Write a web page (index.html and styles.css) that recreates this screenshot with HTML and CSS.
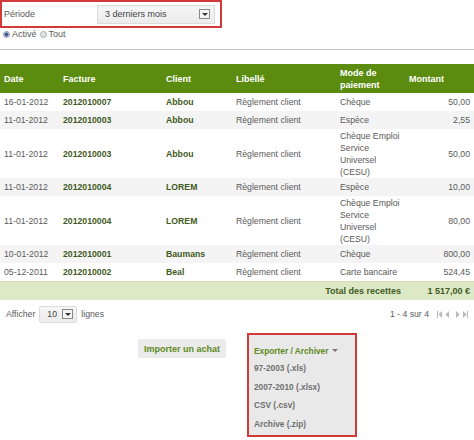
FILE: index.html
```html
<!DOCTYPE html>
<html lang="fr">
<head>
<meta charset="utf-8">
<link rel="stylesheet" href="styles.css">
</head>
<body>
<div class="page">
  <div class="filter">
    <span class="filter-label">Période</span>
    <div class="select select-period">
      <span>3 derniers mois</span>
      <span class="select-btn"><svg width="6" height="3" viewBox="0 0 6 3"><path d="M0 0h6L3 3z" fill="#333"/></svg></span>
    </div>
  </div>
  <div class="radios">
    <span class="radio checked"></span><span class="radio-label">Activé</span>
    <span class="radio"></span><span class="radio-label">Tout</span>
  </div>
  <div class="sep"></div>

  <table class="grid">
    <colgroup>
      <col class="c-date"><col class="c-fact"><col class="c-client"><col class="c-lib"><col class="c-mode"><col class="c-mont">
    </colgroup>
    <thead>
      <tr><th>Date</th><th>Facture</th><th>Client</th><th>Libellé</th><th>Mode de<br>paiement</th><th>Montant</th></tr>
    </thead>
    <tbody>
      <tr><td>16-01-2012</td><td class="b">2012010007</td><td class="b">Abbou</td><td>Règlement client</td><td>Chèque</td><td class="num">50,00</td></tr>
      <tr class="alt"><td>11-01-2012</td><td class="b">2012010003</td><td class="b">Abbou</td><td>Règlement client</td><td>Espèce</td><td class="num">2,55</td></tr>
      <tr class="tall"><td>11-01-2012</td><td class="b">2012010003</td><td class="b">Abbou</td><td>Règlement client</td><td class="wrap">Chèque Emploi Service Universel (CESU)</td><td class="num">50,00</td></tr>
      <tr class="alt"><td>11-01-2012</td><td class="b">2012010004</td><td class="b">LOREM</td><td>Règlement client</td><td>Espèce</td><td class="num">10,00</td></tr>
      <tr class="tall"><td>11-01-2012</td><td class="b">2012010004</td><td class="b">LOREM</td><td>Règlement client</td><td class="wrap">Chèque Emploi Service Universel (CESU)</td><td class="num">80,00</td></tr>
      <tr class="alt"><td>10-01-2012</td><td class="b">2012010001</td><td class="b">Baumans</td><td>Règlement client</td><td>Chèque</td><td class="num">800,00</td></tr>
      <tr><td>05-12-2011</td><td class="b">2012010002</td><td class="b">Beal</td><td>Règlement client</td><td>Carte bancaire</td><td class="num">524,45</td></tr>
    </tbody>
    <tfoot>
      <tr><td colspan="5" class="total-label">Total des recettes</td><td class="num total-val">1 517,00 €</td></tr>
    </tfoot>
  </table>

  <div class="pager">
    <div class="show">
      <span>Afficher</span>
      <div class="select select-len">
        <span>10</span>
        <span class="select-btn"><svg width="6" height="3" viewBox="0 0 6 3"><path d="M0 0h6L3 3z" fill="#333"/></svg></span>
      </div>
      <span>lignes</span>
    </div>
    <div class="pages">
      <span>1 - 4 sur 4</span>
      <span class="nav">
        <svg width="33" height="7" viewBox="0 0 33 7">
          <g fill="#b8b8b8">
            <rect x="0" y="0" width="1" height="7"/><path d="M5 0v7L1.5 3.5z"/>
            <path d="M12 0v7L8.5 3.5z"/>
            <path d="M19 0v7l3.5-3.5z"/>
            <path d="M26 0v7l3.5-3.5z"/><rect x="30" y="0" width="1" height="7"/>
          </g>
        </svg>
      </span>
    </div>
  </div>

  <div class="actions">
    <div class="btn">Importer un achat</div>
    <div class="export">
      <div class="export-head">Exporter / Archiver <svg width="6" height="3" viewBox="0 0 6 3"><path d="M0 0h6L3 3z" fill="#777"/></svg></div>
      <div class="export-item">97-2003 (.xls)</div>
      <div class="export-item">2007-2010 (.xlsx)</div>
      <div class="export-item">CSV (.csv)</div>
      <div class="export-item">Archive (.zip)</div>
    </div>
  </div>
</div>
</body>
</html>
```
FILE: styles.css
```css
* { box-sizing: border-box; }
body {
  margin: 0;
  background: #fff;
  font-family: "Liberation Sans", Arial, sans-serif;
  font-size: 8.7px;
  color: #5a5a5a;
}
.page { width: 474px; }

.filter {
  width: 222px;
  height: 28px;
  border: 2px solid #d23a3a;
  display: flex;
  align-items: center;
  padding-left: 2px;
}
.filter-label { width: 93px; font-size: 9px; }
.select {
  display: flex;
  align-items: center;
  justify-content: space-between;
  border: 1px solid #dcdcdc;
  background: linear-gradient(#f6f6f6, #ececec);
  color: #444;
}
.select-period { width: 118px; height: 19px; padding: 0 4px 0 7px; font-size: 9px; }
.select-btn {
  width: 11px; height: 10px;
  border: 1px solid #888;
  background: #f4f4f4;
  display: flex; align-items: center; justify-content: center;
}

.radios {
  display: flex;
  align-items: center;
  height: 12px;
  padding-left: 3px;
  font-size: 9px;
}
.radio {
  width: 7px; height: 7px;
  border-radius: 50%;
  border: 1px solid #aaa;
  background: #e4e4e4;
  margin-right: 2px;
}
.radio.checked { background: radial-gradient(circle, #3c5f9a 0 1.8px, #dde 2.3px); border-color: #8899aa; }
.radio-label { margin-right: 3px; }

.sep { height: 1px; background: #c4c4c4; margin-top: 9px; }

.grid {
  width: 474px;
  border-collapse: collapse;
  table-layout: fixed;
  margin-top: 14px;
}
.c-date { width: 59px; }
.c-fact { width: 103px; }
.c-client { width: 70px; }
.c-lib { width: 104px; }
.c-mode { width: 69px; }
.c-mont { width: 69px; }

.grid th {
  background: #5b8c10;
  color: #fff;
  font-weight: bold;
  font-size: 9px;
  text-align: left;
  height: 29px;
  padding: 0 4px;
  line-height: 12px;
  vertical-align: middle;
}
.grid td {
  height: 18px;
  padding: 0 4px;
  line-height: 12px;
  vertical-align: middle;
  white-space: nowrap;
}
.grid td.wrap { white-space: normal; padding-right: 2px; }
.grid tr.tall td { height: 49px; }
.grid tr.alt td { background: #f4f4f4; }
.grid .b { font-weight: bold; color: #3f5a22; }
.grid .num { text-align: right; }

.grid tfoot td {
  background: #dce8c6;
  height: 19px;
  border-top: 1px solid #cfdcb6;
  font-size: 9px;
}
.grid .total-label { font-weight: bold; color: #3f5a22; text-align: right; padding-right: 4px; }
.grid .total-val { font-weight: bold; color: #3f5a22; }

.pager {
  display: flex;
  justify-content: space-between;
  align-items: center;
  padding: 5px 4px 0 6px;
  height: 23px;
}
.show { display: flex; align-items: center; gap: 4px; }
.select-len { width: 38px; height: 17px; padding: 0 3px 0 7px; border-radius: 2px; }
.pages { display: flex; align-items: center; gap: 8px; }
.nav { display: flex; align-items: center; }

.actions {
  display: flex;
  align-items: flex-start;
  padding-left: 138px;
  margin-top: 10px;
  gap: 21px;
}
.btn {
  margin-top: 6px;
  background: #ebebeb;
  color: #5d8a20;
  font-weight: bold;
  font-size: 9px;
  height: 19px;
  width: 88px;
  justify-content: center;
  display: flex;
  align-items: center;
  border-radius: 2px;
}
.export {
  width: 110px;
  height: 104px;
  border: 2px solid #d23a3a;
  background: #e9e9e9;
  padding: 7px 0 0 5px;
  font-size: 8.3px;
}
.export-head {
  color: #5d8a20;
  font-weight: bold;
  height: 17px;
  display: flex;
  align-items: center;
  gap: 4px;
}
.export-item {
  height: 18.5px;
  display: flex;
  align-items: center;
  color: #707070;
  font-weight: bold;
}
```
